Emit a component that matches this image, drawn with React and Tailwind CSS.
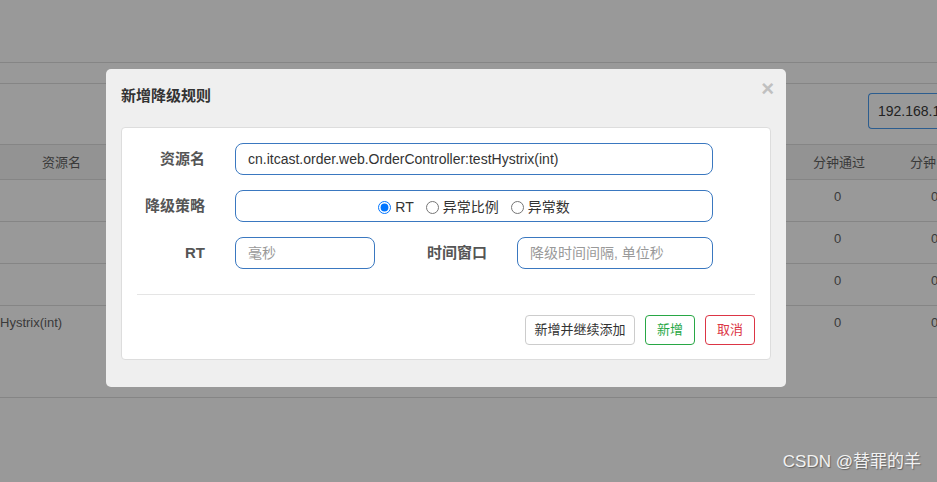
import React from "react";

const font = {fontFamily: '"Liberation Sans", "Noto Sans CJK SC", sans-serif'};

function BgRow({left, value, tall}) {
  return (
    <div className={`relative border-b border-[#858585] ${tall ? "h-[92px]" : "h-[42px]"}`}>
      <span className="absolute left-0 top-[7px] text-[13px] text-[#3a3a3a]">{left}</span>
      <span className="absolute left-[834px] top-[7px] text-[13px] text-[#3a3a3a]">{value}</span>
      <span className="absolute left-[931px] top-[7px] text-[13px] text-[#3a3a3a]">{value}</span>
    </div>
  );
}

function Label({children, className = ""}) {
  return (
    <div className={`text-[15px] font-bold text-[#555] text-right ${className}`}>
      {children}
    </div>
  );
}

function Radio({checked, label}) {
  return (
    <label className="flex items-center gap-[4px] text-[14px] text-[#333]">
      <input type="radio" name="grade" defaultChecked={checked} className="m-0 w-[13px] h-[13px] accent-[#0075ff]" />
      <span>{label}</span>
    </label>
  );
}

export default function App() {
  return (
    <div className="relative w-[937px] h-[482px] overflow-hidden bg-[#999999]" style={font}>
      {/* background page (under backdrop) */}
      <div className="pt-[62px]">
        <div className="border-t border-[#858585] h-[21px]" />
        <div className="border-t border-[#858585] h-[61px] flex justify-end pt-[9px]">
          <div className="w-[69px] h-[36px] border border-[#2c5d8f] rounded-[4px] rounded-r-none border-r-0 flex items-center pl-[9px] text-[14px] text-[#222] whitespace-nowrap overflow-hidden">
            192.168.10
          </div>
        </div>
        <div className="border-t border-[#858585]">
          <div className="relative h-[35px] bg-[#939393] border-b border-[#858585] text-[13px] text-[#3a3a3a]">
            <span className="absolute left-[42px] top-[8px]">资源名</span>
            <span className="absolute left-[813px] top-[8px]">分钟通过</span>
            <span className="absolute left-[910px] top-[8px] whitespace-nowrap">分钟</span>
          </div>
          <BgRow left="" value="0" />
          <BgRow left="" value="0" />
          <BgRow left="" value="0" />
          <BgRow left="Hystrix(int)" value="0" tall />
        </div>
      </div>

      {/* modal */}
      <div className="absolute left-[106px] top-[69px] w-[680px] h-[318px] bg-[#efefef] rounded-[5px] px-[15px] pt-[17px]">
        <div className="flex items-start justify-between">
          <h4 className="text-[15px] font-bold text-[#333] leading-[20px]">新增降级规则</h4>
          <button className="text-[#c0c0c0] text-[22px] font-bold leading-none -mt-[8px] mr-[-3px]">×</button>
        </div>
        <div className="mt-[21px] bg-white border border-[#dddddd] rounded-[4px] h-[233px] px-[15px] pt-[15px]">
          <div className="flex flex-col gap-[15px]">
            <div className="flex items-center">
              <Label className="w-[68px]">资源名</Label>
              <div className="ml-[30px] w-[478px] h-[32px] border border-[#3a78c0] rounded-[8px] flex items-center px-[12px] text-[14px] text-[#333]">
                cn.itcast.order.web.OrderController:testHystrix(int)
              </div>
            </div>
            <div className="flex items-center">
              <Label className="w-[68px]">降级策略</Label>
              <div className="ml-[30px] w-[478px] h-[32px] border border-[#3a78c0] rounded-[8px] flex items-center justify-center gap-[12px] pt-[2px]">
                <Radio checked label="RT" />
                <Radio label="异常比例" />
                <Radio label="异常数" />
              </div>
            </div>
            <div className="flex items-center">
              <Label className="w-[68px]">RT</Label>
              <div className="ml-[30px] w-[140px] h-[32px] border border-[#3a78c0] rounded-[8px] flex items-center px-[12px] text-[14px] text-[#999]">
                毫秒
              </div>
              <Label className="w-[112px]">时间窗口</Label>
              <div className="ml-[30px] w-[196px] h-[32px] border border-[#3a78c0] rounded-[8px] flex items-center px-[12px] text-[14px] text-[#999]">
                降级时间间隔, 单位秒
              </div>
            </div>
          </div>
          <div className="mt-[25px] border-t border-[#e5e5e5]" />
          <div className="mt-[20px] flex justify-end gap-[10px]">
            <button className="w-[110px] h-[30px] border border-[#cccccc] rounded-[4px] bg-white text-[13px] text-[#333]">
              新增并继续添加
            </button>
            <button className="w-[50px] h-[30px] border border-[#28a745] rounded-[4px] bg-white text-[13px] text-[#28a745]">
              新增
            </button>
            <button className="w-[50px] h-[30px] border border-[#dc3545] rounded-[4px] bg-white text-[13px] text-[#dc3545]">
              取消
            </button>
          </div>
        </div>
      </div>

      {/* watermark */}
      <div className="absolute right-[16px] bottom-[8px] text-[17px] text-[#f2f2f2] [text-shadow:1px_1px_1px_rgba(0,0,0,0.35)]">
        CSDN @替罪的羊
      </div>
    </div>
  );
}
